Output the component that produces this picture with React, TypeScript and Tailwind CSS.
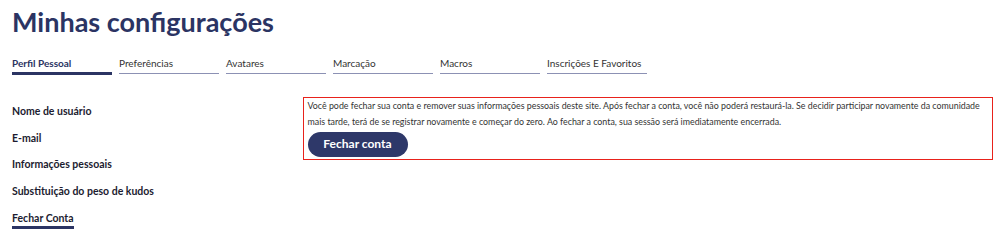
const tabs = [
  { label: 'Perfil Pessoal', active: true },
  { label: 'Preferências' },
  { label: 'Avatares' },
  { label: 'Marcação' },
  { label: 'Macros' },
  { label: 'Inscrições E Favoritos' },
];

const sideItems = [
  'Nome de usuário',
  'E-mail',
  'Informações pessoais',
  'Substituição do peso de kudos',
];

export default function App() {
  return (
    <div className="w-[999px] h-[239px] bg-white overflow-hidden pl-3 pr-[6px] font-['Lato',sans-serif]">
      <h1 className="mt-[7.5px] text-[27px] leading-none font-bold text-[#2b3463]">Minhas configurações</h1>

      {/* tabs */}
      <div className="mt-[22px] flex gap-[7px]">
        {tabs.map((t) => (
          <div key={t.label} className="w-[100px] flex flex-col">
            <span
              className={`text-[10px] leading-[12px] ${
                t.active ? 'font-bold text-[#2b3463]' : 'text-[#333]'
              }`}
            >
              {t.label}
            </span>
            {t.active ? (
              <div className="mt-[3px] h-[3px] bg-[#2b3463]"></div>
            ) : (
              <div className="mt-[4px] mb-px h-px bg-[#8c91b4]"></div>
            )}
          </div>
        ))}
      </div>

      <div className="mt-[22.5px] flex">
        {/* side nav */}
        <div className="w-[291px] shrink-0 pt-[8px] flex flex-col gap-[13.67px] items-start">
          {sideItems.map((s) => (
            <span key={s} className="text-[10.5px] leading-[13px] font-bold text-[#1c1c30]">
              {s}
            </span>
          ))}
          <span className="text-[10.5px] leading-[13px] font-bold text-[#1c1c30] border-b-[3px] border-[#2b3463] pb-px">
            Fechar Conta
          </span>
        </div>

        {/* close account box */}
        <div className="flex-1 h-[62.5px] border-[1.5px] border-[#e8221b] pl-[3.5px]">
          <p className="text-[8.85px] leading-[16px] text-[#333] whitespace-nowrap">
            Você pode fechar sua conta e remover suas informações pessoais deste site. Após fechar a conta, você não poderá restaurá-la. Se decidir participar novamente da comunidade
            <br />
            mais tarde, terá de se registrar novamente e começar do zero. Ao fechar a conta, sua sessão será imediatamente encerrada.
          </p>
          <button className="mt-[-1px] w-[100px] h-[25px] rounded-full bg-[#2e3869] text-white text-[12px] font-bold">
            Fechar conta
          </button>
        </div>
      </div>
    </div>
  );
}
